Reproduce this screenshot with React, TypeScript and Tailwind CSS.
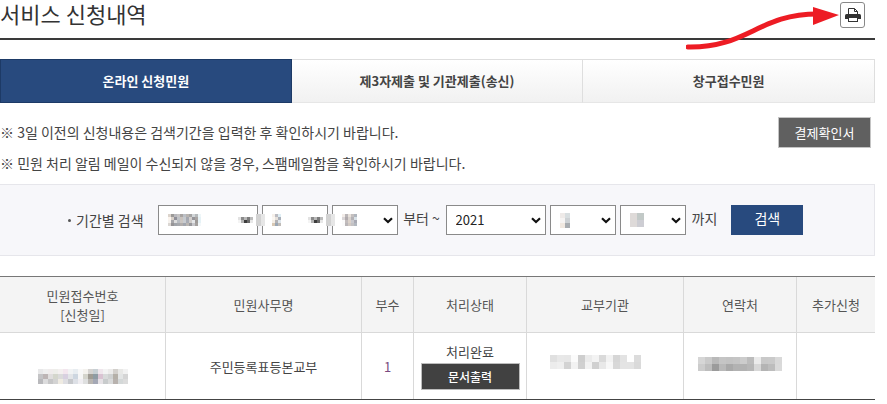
import React from "react";

type MosaicProps = { rows: string[][]; cell: number };

/* Pixelated block that hides a private value. */
function Mosaic({ rows, cell }: MosaicProps) {
  const width = rows[0].length * cell;
  const height = rows.length * cell;
  return (
    <svg width={width} height={height} shapeRendering="crispEdges" aria-hidden="true" className="block">
      {rows.map((row, y) =>
        row.map((color, x) => (
          <rect key={`${x}-${y}`} x={x * cell} y={y * cell} width={cell} height={cell} fill={`#${color}`} />
        )),
      )}
    </svg>
  );
}

const split = (text: string) => text.split(" ");

const receiptMosaic = [
  split("e8e8e9 efefef f0ecec eeeeea f4f0f0 f3e6ee f1f3f4 e8edf1 f8f8f8 f4f2ee d6d4d2 c8d0d4 efe6ec f3f3f3 ecebea d3d0cc e8e8e6 f2f2f2"),
  split("c4c4c6 bdb5b5 e0dede d4d6cc dbdbdb d8d0e0 e3e5e8 cdd6e0 f6f6f6 d4d4cc a09c94 8f9ca4 d9c3d2 d8dada cfd1d1 b5b0a8 e3e5e5 d5d5d5"),
  split("b9b9bc dcdcdd c6c6c7 d3d3d3 efebe2 dedee2 c6c8cc dde0e6 f0eef2 dedfdf b9b6b2 a4a8b5 e6e2e6 c8cbcc d9dada b8b2ae d4d8d8 dcdcdc"),
];
const agencyMosaic = [
  split("e0e0e0 e8e8e8 e7e7e7 fbfbfb cecece ebebeb f3f3f3 dadada f2f2f2 d6d6d6 e3e3e3 ffffff dcdcdc"),
  split("ececec efefef d3d3d3 f2f2f2 d0d0d0 f2f2f2 d0d0d0 e8e8e8 f7f7f7 d8d8d8 e4e4e4 e4e4e4 dadada"),
];
const phoneMosaic = [
  split("d6d6d6 cacaca b9b9b9 c5c5c5 c3c3c3 c5c5c5 cccccc bcbcbc ebebeb c9c9c9 cacaca d9d9d9"),
  split("cccccc bdbdbd 9b9b9b b9b9b9 a9a9a9 b2b2b2 b2b2b2 b7b7b7 d8d8d8 b4b4b4 bdbdbd dadada"),
];
const yearMosaic = [
  split("dcd4cc 9c9a98 b9b9be c6c4c4 a8a4a2 bcc0c6 b9b4b0 a5a5a5 d2d6d8 b6babc eef6f8"),
  split("fbf4ee d8d0c8 8f8f98 bfc2c6 c9c2bd c6cace a5a8b0 d2cecc 95959a a9a4a2 e6f2f6"),
  split("f6f2ee a6a6aa dcdcdc b8bcc2 cbc6c2 c9ccd0 a9acb4 cfcbc8 e4e6e8 9e9a98 e6f2f6"),
  split("dad6d2 969496 a0a4aa a6a8ac b2aeac a2a6ae bab6b2 98989c c6c6ca a4a09e f4f8fa"),
];
const monthMosaic = [
  split("f6f0ea bcbcc2 dfeef4"),
  split("fbf7f2 e6e0da a9b0ba"),
  split("f4eee6 b4b2b4 dfe6ec"),
  split("d8c8b4 9aa6b4 c0bcb8"),
];
const dayMosaic = [
  split("f2ece8 bab6b8 e8e2dc c4c0c0 b0b6be"),
  split("dad6d8 b0aaac d8d2ce b4b2b6 d9e2e8"),
  split("fbfbfb c2bcbc dcd2ca c9c9ce a9aab4"),
  split("fbfbfb bab6b8 d2cac4 c4c2c4 b2b8c0"),
];
const endMonthMosaic = [split("eeeae8 d8dee0"), split("f6f4f3 cdd1d4"), split("f0e8e0 a8acb0")];
const endDayMosaic = [split("dedad8 c2c9c7"), split("dedad9 cdcdd3")];
const arrowMosaic = [
  split("e2e2e2 8a8a8a b8b8b8 7c7c7c bcbcbc"),
  split("f4f4f4 b4b4b4 3c3c3c 6a6a6a e8e8e8"),
];

type PickerProps = {
  label: string;
  value?: string;
  wide?: boolean;
  mosaic?: MosaicProps;
  blurredArrow?: boolean;
};

function Picker({ label, value = "", wide, mosaic, blurredArrow }: PickerProps) {
  return (
    <span className={`relative block h-[30px] shrink-0 ${wide ? "w-[100px]" : "w-[66px]"}`}>
      <select
        aria-label={label}
        defaultValue={value}
        className="block h-full w-full appearance-none border border-[#8a8a8a] bg-white px-[9px] text-[13px] text-[#222]"
      >
        <option value={value}>{value}</option>
      </select>
      {mosaic && (
        <span className="pointer-events-none absolute inset-y-0 left-[10px] flex items-center">
          <Mosaic {...mosaic} />
        </span>
      )}
      <span className="pointer-events-none absolute inset-y-0 right-[5px] flex items-center">
        {blurredArrow ? (
          <Mosaic rows={arrowMosaic} cell={3} />
        ) : (
          <svg width="10" height="7" viewBox="0 0 10 7" fill="none" aria-hidden="true">
            <path d="M1 1.2 L5 5 L9 1.2" stroke="#111" strokeWidth="2.2" />
          </svg>
        )}
      </span>
      {blurredArrow && (
        <span className="pointer-events-none absolute top-[9px] -right-[7px] z-10 flex h-3 w-[9px]">
          <span className="w-[5px] bg-[#d2d2d2]" />
          <span className="w-1 bg-[#e6e6e6]" />
        </span>
      )}
    </span>
  );
}

function PrinterIcon() {
  return (
    <svg width="16" height="14" viewBox="0 0 16 14" aria-hidden="true" className="shrink-0">
      <path d="M3.5 7 V0.5 H9.5 L12.5 3.5 V7" fill="#fff" stroke="#333" />
      <path d="M9.5 0.5 V3.5 H12.5" fill="none" stroke="#333" />
      <path d="M1.5 6 H14.5 Q16 6 16 7.5 V11 H0 V7.5 Q0 6 1.5 6 Z" fill="#333" />
      <rect x="3.5" y="9.5" width="9" height="4" fill="#fff" stroke="#333" />
    </svg>
  );
}

const tabs = ["온라인 신청민원", "제3자제출 및 기관제출(송신)", "창구접수민원"];

const th = "border-r border-b border-[#d9d9d9] p-0 font-normal last:border-r-0";
const td = "border-r border-[#d9d9d9] p-0 last:border-r-0";

export default function App() {
  return (
    <main className="relative bg-white pr-3 font-['Noto_Sans_CJK_KR',sans-serif] text-[#444]">
      <header className="flex h-10 items-start justify-between border-b-2 border-[#3a3a3a]">
        <h1 className="text-[22px] leading-[26px] text-[#333]">서비스 신청내역</h1>
        <button
          type="button"
          aria-label="인쇄"
          className="mt-[2px] mr-[10px] flex h-[26px] w-[25px] items-center justify-center rounded-[3px] border border-[#888] bg-white"
        >
          <PrinterIcon />
        </button>
      </header>
      <svg
        width="154"
        height="44"
        viewBox="0 0 154 44"
        aria-hidden="true"
        className="pointer-events-none absolute top-[6px] right-[47px]"
      >
        <path d="M2 41 C62 42 72 8 132 8" fill="none" stroke="#ed1c24" strokeWidth="5" strokeLinecap="round" />
        <path d="M127 1 L153 9 L127 19 Z" fill="#ed1c24" />
      </svg>

      <nav className="mt-[19px] grid h-11 grid-cols-3 text-[13px] font-bold">
        {tabs.map((tab, i) => (
          <button
            key={tab}
            type="button"
            className={
              i === 0
                ? "border border-[#1d3a66] bg-[#284a7e] text-white"
                : "border-y border-r border-[#dedede] border-b-[#e6e6e6] bg-linear-to-b from-white to-[#f1f1f1] text-[#444]"
            }
          >
            {tab}
          </button>
        ))}
      </nav>

      <section className="mt-[14px] flex items-start justify-between">
        <div className="text-[14px] leading-[31px]">
          <p>※ 3일 이전의 신청내용은 검색기간을 입력한 후 확인하시기 바랍니다.</p>
          <p>※ 민원 처리 알림 메일이 수신되지 않을 경우, 스팸메일함을 확인하시기 바랍니다.</p>
        </div>
        <button
          type="button"
          className="mr-1 h-[31px] w-[93px] border border-[#c4c4c4] bg-[#606060] text-[13px] text-white"
        >
          결제확인서
        </button>
      </section>

      <form
        className="mt-[5px] flex h-[72px] items-center gap-1 border border-l-0 border-[#e6e6eb] bg-[#f7f7fa] pl-[68px] text-[14px]"
        onSubmit={(e) => e.preventDefault()}
      >
        <span className="mr-[10px] flex items-center gap-[5px]">
          <span className="h-[3px] w-[3px] rounded-full bg-[#555]" />
          기간별 검색
        </span>
        <Picker label="시작 연도" wide mosaic={{ rows: yearMosaic, cell: 3 }} blurredArrow />
        <Picker label="시작 월" mosaic={{ rows: monthMosaic, cell: 3 }} blurredArrow />
        <Picker label="시작 일" mosaic={{ rows: dayMosaic, cell: 3 }} />
        <span className="w-10 pb-1 text-center whitespace-nowrap">부터 ~</span>
        <Picker label="종료 연도" value="2021" wide />
        <Picker label="종료 월" mosaic={{ rows: endMonthMosaic, cell: 5 }} />
        <Picker label="종료 일" mosaic={{ rows: endDayMosaic, cell: 7 }} />
        <span className="px-[2px] pb-1 whitespace-nowrap">까지</span>
        <button type="submit" className="ml-2 h-[30px] w-[72px] bg-[#284a7e] pb-1 text-[14px] text-white">
          검색
        </button>
      </form>

      <table className="mt-5 w-full table-fixed border-separate border-spacing-0 border-t border-b border-t-[#777] border-b-[#444] text-center text-[13px] leading-[19px]">
        <colgroup>
          <col className="w-[166px]" />
          <col className="w-[196px]" />
          <col className="w-[52px]" />
          <col className="w-[113px]" />
          <col className="w-[157px]" />
          <col className="w-[113px]" />
          <col className="w-[78px]" />
        </colgroup>
        <thead>
          <tr className="h-14 bg-[#f4f4f4] text-[#555]">
            <th className={th}>
              민원접수번호
              <br />
              [신청일]
            </th>
            <th className={th}>민원사무명</th>
            <th className={th}>부수</th>
            <th className={th}>처리상태</th>
            <th className={th}>교부기관</th>
            <th className={th}>연락처</th>
            <th className={th}>추가신청</th>
          </tr>
        </thead>
        <tbody>
          <tr className="h-[66px]">
            <td className={td}>
              <div className="flex justify-center pt-5">
                <Mosaic rows={receiptMosaic} cell={5} />
              </div>
            </td>
            <td className={td}>주민등록표등본교부</td>
            <td className={`${td} text-[#7a4a80]`}>1</td>
            <td className={td}>
              <div className="flex flex-col items-center gap-[2px]">
                처리완료
                <button
                  type="button"
                  className="h-[27px] w-[99px] border border-[#bcbcbc] bg-[#414141] text-[12px] font-medium text-white"
                >
                  문서출력
                </button>
              </div>
            </td>
            <td className={td}>
              <div className="flex justify-center pr-5 pb-2">
                <Mosaic rows={agencyMosaic} cell={7} />
              </div>
            </td>
            <td className={td}>
              <div className="flex justify-center pb-1">
                <Mosaic rows={phoneMosaic} cell={7} />
              </div>
            </td>
            <td className={td} />
          </tr>
        </tbody>
      </table>
    </main>
  );
}
